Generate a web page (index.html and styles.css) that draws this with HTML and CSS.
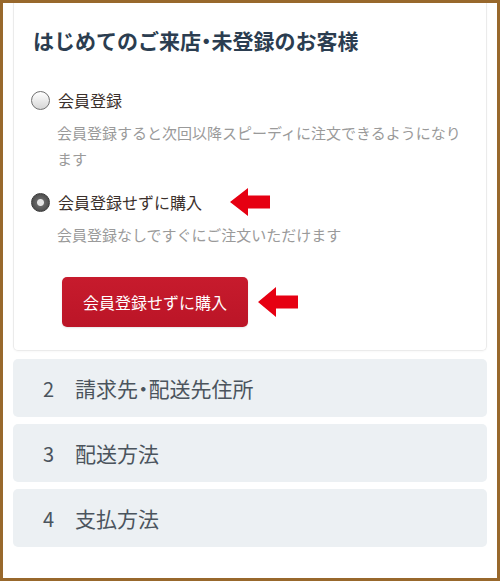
FILE: index.html
```html
<!DOCTYPE html>
<html>
<head>
<meta charset="utf-8"/>
<meta name="viewport" content="width=device-width, initial-scale=1.0" />
<link rel="stylesheet" href="styles.css">
</head>
<body>

<div class="frame">

<div class="card">
<h2 class="card-title">はじめてのご来店<span class="dot">・</span>未登録のお客様</h2>

<div class="option">
<label class="option-row"><span class="radio"></span>会員登録</label>
<p class="option-desc">会員登録すると次回以降スピーディに注文できるようになります</p>
</div>

<div class="option second">
<label class="option-row"><span class="radio on"></span>会員登録せずに購入
<svg class="arrow first-arrow" width="40" height="28" viewBox="0 0 40 28"><path d="M0 14 L18 0 L18 7.5 L40 7.5 L40 20.5 L18 20.5 L18 28 Z" fill="#e60012"/></svg>
</label>
<p class="option-desc">会員登録なしですぐにご注文いただけます</p>
</div>

<div class="btn-row">
<button class="buy-btn">会員登録せずに購入</button>
<svg class="arrow" width="40" height="30" viewBox="0 0 40 30"><path d="M0 15 L18 0 L18 8.5 L40 8.5 L40 21.5 L18 21.5 L18 30 Z" fill="#e60012"/></svg>
</div>
</div>

<div class="step"><span class="step-num">2</span>請求先<span class="dot">・</span>配送先住所</div>
<div class="step"><span class="step-num">3</span>配送方法</div>
<div class="step"><span class="step-num">4</span>支払方法</div>

</div>

</body>
</html>
```

FILE: styles.css
```css
body {
  margin: 0;
  padding: 0;
  font-family: "Noto Sans CJK JP", "Noto Sans", sans-serif;
  background: #fff;
}

.frame {
  box-sizing: border-box;
  width: 500px;
  height: 581px;
  border: 3px solid #98682c;
  padding: 0 10px;
  overflow: hidden;
  background: #fff;
}

/* top of the card runs off the picture */
.card {
  border: 1px solid #ebebeb;
  border-top: 0;
  border-radius: 0 0 5px 5px;
  padding: 23px 20px 23px 19px;
  box-shadow: 0 1px 2px rgba(0,0,0,0.03);
}

.card-title {
  margin: 0;
  font-size: 21px;
  line-height: 28px;
  font-weight: bold;
  color: #2b3d50;
}

/* narrow middle dot */
.dot {
  font-feature-settings: "palt";
}

.option {
  margin-top: 34px;
}

.option.second {
  margin-top: 18px;
}

.option-row {
  display: flex;
  align-items: center;
  height: 24px;
  font-size: 16px;
  line-height: 24px;
  color: #3b302c;
}

.radio {
  box-sizing: border-box;
  width: 19px;
  height: 19px;
  margin-left: -2px;
  margin-right: 8px;
  border-radius: 50%;
  border: 1.5px solid #707070;
  background: linear-gradient(#ffffff, #d6d6d6);
}

.radio.on {
  border-color: #3a3a3a;
  background: radial-gradient(circle, #e4e4e4 0 3px, #666 4px, #3c3c3c 100%);
}

.arrow {
  display: block;
}

.first-arrow {
  margin-left: 28px;
}

.option-desc {
  margin: 8px 0 0 24px;
  font-size: 15px;
  line-height: 26px;
  color: #9a9a9a;
}

.btn-row {
  display: flex;
  align-items: center;
  gap: 10px;
  margin: 29px 0 0 29px;
}

.buy-btn {
  height: 50px;
  width: 186px;
  border: 0;
  border-radius: 5px;
  background: linear-gradient(#c71b2d, #bb1527);
  color: #fff;
  font-family: inherit;
  font-size: 16px;
  box-shadow: 0 1px 2px rgba(0,0,0,0.1);
}

.step {
  display: flex;
  align-items: center;
  height: 58px;
  margin-top: 7px;
  padding-left: 30px;
  border-radius: 5px;
  background: #ecf0f3;
  font-size: 21px;
  color: #4b545d;
}

.card + .step {
  margin-top: 8px;
}

.step-num {
  width: 32px;
  font-size: 20px;
}
```
